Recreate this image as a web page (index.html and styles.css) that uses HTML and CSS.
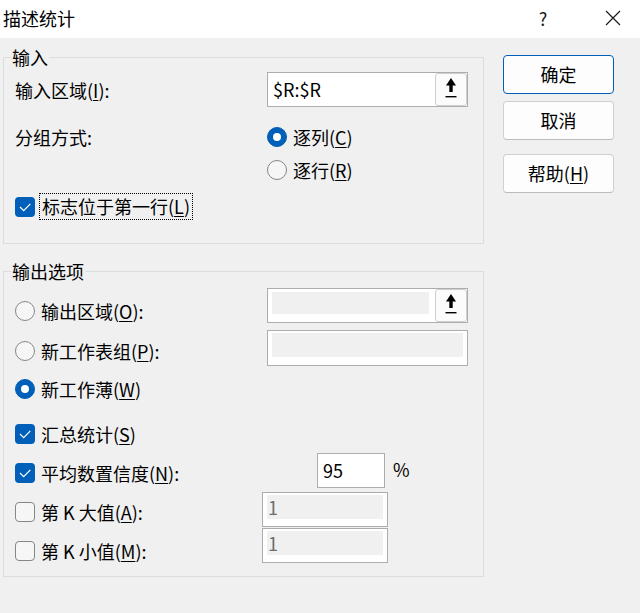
FILE: index.html
```html
<!DOCTYPE html>
<html lang="zh-CN">
<head>
    <meta charset="UTF-8">
    <title>描述统计</title>
    <link rel="stylesheet" href="styles.css">
</head>
<body>
    <div class="titlebar">
        <div class="title">描述统计</div>
        <div class="tb-btn">?</div>
        <div class="tb-btn">
            <svg width="16" height="16" viewBox="0 0 16 16"><path d="M1 1L15 15M15 1L1 15" stroke="#1a1a1a" stroke-width="1.2" fill="none"/></svg>
        </div>
    </div>

    <div class="main">
        <div class="left">
            <fieldset class="group">
                <legend>输入</legend>
                <div class="group-body g1">
                    <div class="row row-a">
                        <div class="lbl">输入区域(<u>I</u>):</div>
                        <div class="field field-wide">
                            <span class="field-value">$R:$R</span>
                            <span class="pick">
                                <svg width="12" height="20" viewBox="0 0 12 20"><polygon points="6,0 11,7.5 1,7.5" fill="#000"/><rect x="4.3" y="7" width="3.4" height="7" fill="#000"/><rect x="0.5" y="18" width="11" height="1.4" fill="#000"/></svg>
                            </span>
                        </div>
                    </div>
                    <div class="row row-b">
                        <div class="lbl">分组方式:</div>
                        <label class="opt"><span class="radio on"></span><span>逐列(<u>C</u>)</span></label>
                    </div>
                    <div class="row row-c">
                        <label class="opt indent"><span class="radio"></span><span>逐行(<u>R</u>)</span></label>
                    </div>
                    <div class="row row-d">
                        <label class="opt opt-focus"><span class="check on"><svg width="20" height="20" viewBox="0 0 20 20"><polyline points="5,10 8.7,13.6 15.3,6.8" fill="none" stroke="#fff" stroke-width="1.2"/></svg></span><span class="focus">标志位于第一行(<u>L</u>)</span></label>
                    </div>
                </div>
            </fieldset>

            <fieldset class="group group-out">
                <legend>输出选项</legend>
                <div class="group-body g2">
                    <div class="row row-o">
                        <label class="opt lbl-w"><span class="radio"></span><span>输出区域(<u>O</u>):</span></label>
                        <div class="field field-wide">
                            <span class="field-box box-o"></span>
                            <span class="pick">
                                <svg width="12" height="20" viewBox="0 0 12 20"><polygon points="6,0 11,7.5 1,7.5" fill="#000"/><rect x="4.3" y="7" width="3.4" height="7" fill="#000"/><rect x="0.5" y="18" width="11" height="1.4" fill="#000"/></svg>
                            </span>
                        </div>
                    </div>
                    <div class="row row-p">
                        <label class="opt lbl-w"><span class="radio"></span><span>新工作表组(<u>P</u>):</span></label>
                        <div class="field field-wide field-p">
                            <span class="field-box"></span>
                        </div>
                    </div>
                    <div class="row row-w">
                        <label class="opt"><span class="radio on"></span><span>新工作薄(<u>W</u>)</span></label>
                    </div>
                    <div class="row row-s">
                        <label class="opt"><span class="check on"><svg width="20" height="20" viewBox="0 0 20 20"><polyline points="5,10 8.7,13.6 15.3,6.8" fill="none" stroke="#fff" stroke-width="1.2"/></svg></span><span>汇总统计(<u>S</u>)</span></label>
                    </div>
                    <div class="row row-n">
                        <label class="opt lbl-n"><span class="check on"><svg width="20" height="20" viewBox="0 0 20 20"><polyline points="5,10 8.7,13.6 15.3,6.8" fill="none" stroke="#fff" stroke-width="1.2"/></svg></span><span>平均数置信度(<u>N</u>):</span></label>
                        <div class="field field-n"><span class="field-value">95</span></div>
                        <span class="pct">%</span>
                    </div>
                    <div class="row row-k1">
                        <label class="opt lbl-k"><span class="check"></span><span>第 K 大值(<u>A</u>):</span></label>
                        <div class="field field-k"><span class="field-box">1</span></div>
                    </div>
                    <div class="row row-k2">
                        <label class="opt lbl-k"><span class="check"></span><span>第 K 小值(<u>M</u>):</span></label>
                        <div class="field field-k"><span class="field-box">1</span></div>
                    </div>
                </div>
            </fieldset>
        </div>

        <div class="buttons">
            <div class="btn btn-default">确定</div>
            <div class="btn">取消</div>
            <div class="btn btn-help">帮助(<u>H</u>)</div>
        </div>
    </div>
</body>
</html>
```

FILE: styles.css
```css
body {
    margin: 0;
    width: 640px;
    height: 613px;
    background-color: #f0f0f0;
    font-family: "Noto Sans CJK SC", "Noto Sans", sans-serif;
    font-size: 18px;
    color: #000;
    overflow: hidden;
}
u {
    text-underline-offset: 2px;
    text-decoration-thickness: 1px;
}
.titlebar {
    height: 38px;
    background-color: #fff;
    display: flex;
    align-items: center;
    padding-right: 4px;
    box-sizing: border-box;
}
.title {
    flex: 1;
    padding-left: 3px;
    padding-bottom: 3px;
    line-height: 20px;
}
.tb-btn {
    width: 46px;
    height: 38px;
    display: flex;
    align-items: center;
    justify-content: center;
    color: #1a1a1a;
    padding-bottom: 3px;
    box-sizing: border-box;
}
.tb-btn + .tb-btn {
    margin-left: 24px;
}
.main {
    display: flex;
    gap: 19px;
    padding: 9px 0 0 3px;
}
.left {
    width: 481px;
}
.group {
    margin: 0;
    padding: 0;
    border: 1px solid #dcdcdc;
    min-width: 0;
}
.group legend {
    margin-left: 7px;
    padding: 0 1px;
    line-height: 20px;
}
.group-out {
    margin-top: 17px;
}
.group-body {
    padding-left: 11px;
}
.g1 {
    padding-top: 5px;
    padding-bottom: 23px;
}
.g2 {
    padding-top: 7px;
    padding-bottom: 12px;
}
.row {
    display: flex;
    align-items: flex-start;
}
.lbl {
    width: 252px;
    line-height: 26px;
}
.opt {
    display: flex;
    align-items: center;
    gap: 6px;
    height: 26px;
    line-height: 26px;
}
.opt-focus {
    gap: 4px;
    height: 27px;
}
.focus {
    border: 1px dotted #000;
    padding: 0 2px;
    line-height: 25px;
}
.indent {
    margin-left: 252px;
}
.radio {
    width: 20px;
    height: 20px;
    box-sizing: border-box;
    border: 1px solid #868686;
    border-radius: 50%;
    background-color: #f6f6f6;
    display: flex;
    align-items: center;
    justify-content: center;
    flex: none;
}
.radio.on {
    border-color: #005fb8;
    background-color: #005fb8;
}
.radio.on::after {
    content: "";
    width: 8px;
    height: 8px;
    border-radius: 50%;
    background-color: #fff;
}
.check {
    width: 20px;
    height: 20px;
    box-sizing: border-box;
    border: 1px solid #868686;
    border-radius: 4px;
    background-color: #f6f6f6;
    flex: none;
    display: flex;
}
.check.on {
    border: none;
    background-color: #005fb8;
}
.field {
    display: flex;
    align-items: flex-start;
    box-sizing: border-box;
    background-color: #fff;
    border: 1px solid #adadad;
    height: 35px;
}
.field-wide {
    width: 201px;
}
.field-p {
    height: 36px;
}
.field-value {
    flex: 1;
    padding-left: 5px;
    line-height: 32px;
}
.pick {
    margin: 0 0 0 auto;
    width: 32px;
    height: 33px;
    box-sizing: border-box;
    border: 1px solid #cfcfcf;
    border-radius: 3px;
    background-color: #fbfbfb;
    display: flex;
    align-items: center;
    justify-content: center;
    padding-bottom: 3px;
    padding-right: 1px;
}
.field-box {
    flex: 1;
    margin: 2px 4px 0;
    height: 24px;
    background-color: #f0f0f0;
    color: #6d6d6d;
    line-height: 24px;
    padding-left: 1px;
}
.field-box.box-o {
    margin: 3px 6px 0 4px;
    height: 22px;
}
.row-o .lbl-w {
    margin-top: 10px;
}
.lbl-w {
    width: 252px;
}
.row-p {
    margin-top: 6px;
}
.row-p .lbl-w {
    margin-top: 8px;
}
.row-b {
    margin-top: 17px;
}
.row-c {
    margin-top: 7px;
}
.row-d {
    margin-top: 10px;
}
.row-a {
    align-items: center;
}
.row-w {
    margin-top: 10px;
}
.row-s {
    margin-top: 19px;
}
.row-n {
    margin-top: 6px;
}
.lbl-n {
    width: 302px;
    margin-top: 7px;
}
.field-n {
    width: 68px;
}
.pct {
    margin-left: 8px;
    line-height: 32px;
}
.row-k1 {
    margin-top: 4px;
}
.row-k2 {
    margin-top: 1px;
}
.lbl-k {
    width: 247px;
    margin-top: 7px;
}
.row-k2 .lbl-k {
    margin-top: 10px;
}
.field-k {
    width: 126px;
}
.buttons {
    width: 111px;
    margin-top: 8px;
    display: flex;
    flex-direction: column;
    gap: 7px;
}
.btn {
    height: 39px;
    box-sizing: border-box;
    border: 1px solid #d0d0d0;
    border-bottom-color: #bcbcbc;
    border-radius: 4px;
    background-color: #fdfdfd;
    display: flex;
    align-items: center;
    justify-content: center;
    padding-bottom: 2px;
}
.btn-default {
    border-color: #005fb8;
}
.btn-help {
    margin-top: 7px;
}
```
